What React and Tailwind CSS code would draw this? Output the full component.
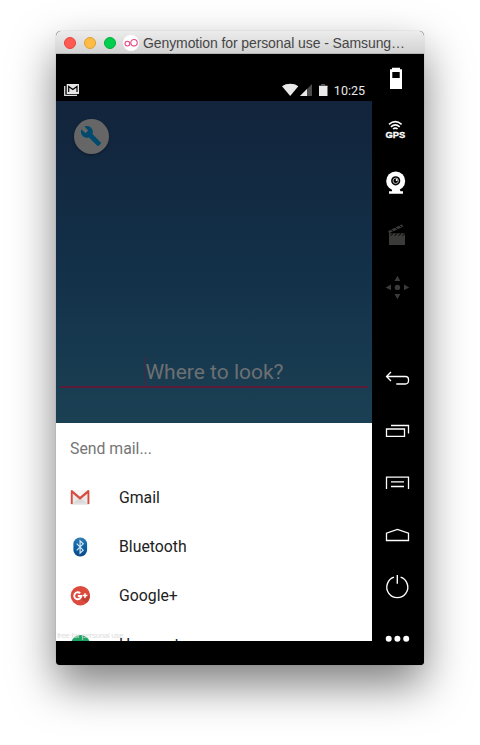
import React from "react";

function Slot({ children, label }) {
  return (
    <svg aria-label={label} className="block h-[52px] w-[52px] shrink-0" viewBox="0 0 52 52" fill="none">
      {children}
    </svg>
  );
}

function TitleBar() {
  return (
    <div className="flex h-[23px] shrink-0 items-center rounded-t-[5px] border-b border-[#b5b5b5] bg-linear-to-b from-[#ececec] to-[#d3d3d3] pt-px pl-2">
      <div className="flex gap-2">
        <span className="size-3 rounded-full border border-[#e2463f] bg-[#ff5a52]" />
        <span className="size-3 rounded-full border border-[#dfa033] bg-[#ffbc44]" />
        <span className="size-3 rounded-full border border-[#05ac3c] bg-[#00ce4e]" />
      </div>
      <svg className="ml-[7px] size-4" viewBox="0 0 16 16" fill="none">
        <circle cx="8" cy="8" r="8" fill="#fff" />
        <circle cx="4.4" cy="8.6" r="2.4" stroke="#e6457f" strokeWidth="1.1" />
        <circle cx="11" cy="7.7" r="3.2" stroke="#e6457f" strokeWidth="1.1" />
      </svg>
      <span className="ml-1 whitespace-nowrap font-['Liberation_Sans',Arial,sans-serif] text-[14px] leading-none tracking-[-0.090px] text-[#464646]">
        Genymotion for personal use - Samsung…
      </span>
    </div>
  );
}

function StatusBar() {
  return (
    <div className="flex h-[47px] shrink-0 items-end justify-between bg-black pr-[7px] pb-[3px] pl-2">
      <svg className="mb-[1px] h-[14px] w-4" viewBox="0 0 16 14" fill="none">
        <path d="M.7 3v9.4h12.3" stroke="#dedede" strokeWidth="1.3" />
        <rect x="2.7" y="1" width="12.3" height="10" fill="#e6e6e6" />
        <path d="M4.7 9V3.4L8.8 6.500 13 3.400V9" stroke="#000" strokeWidth="1.2" />
      </svg>
      <div className="flex items-end">
        <svg className="mb-[1px] h-[14px] w-[48px]" viewBox="0 0 48 14">
          <path d="M0 3.300C4.300 0 12.300 0 16.300 3.300L8.200 13Z" fill="#e9e9e9" />
          <path d="M30 1V13H18Z" fill="#4b4b4b" />
          <path d="M25 6V13H18Z" fill="#e9e9e9" />
          <path d="M39 1H43V2.200H45.500V4H37V2.200H39Z" fill="#555" />
          <path d="M37 3H45.500V13H37Z" fill="#e9e9e9" />
        </svg>
        <span className="ml-1 font-[Roboto,sans-serif] text-[12.500px] leading-[15px] text-[#e9e9e9]">10:25</span>
      </div>
    </div>
  );
}

function SearchScreen() {
  return (
    <div className="flex h-[322px] shrink-0 flex-col bg-linear-to-b from-[#12243c] via-[#123048] to-[#1b4054] pt-[17.500px]">
      <div className="ml-[17.500px] flex size-[35.500px] items-center justify-center rounded-full bg-[#666] shadow-[0_1px_3px_rgba(0,0,0,0.4)]">
        <svg className="size-[22px]" viewBox="0 0 24 24" fill="#014a6e">
          <path d="M22.700 19l-9.100-9.100c.9-2.300.4-5-1.500-6.900-2-2-5-2.400-7.400-1.300L9 6 6 9 1.600 4.700C.4 7.100.9 10.100 2.900 12.100c1.900 1.900 4.600 2.400 6.900 1.500l9.100 9.100c.4.4 1 .4 1.400 0l2.300-2.300c.5-.4.5-1.100.1-1.400z" />
        </svg>
      </div>
      <div className="mx-1 mt-[203px] flex h-[31px] items-start justify-center border-b-2 border-[#5a1c38]">
        <span className="flex h-[29px] items-center border-l border-[#4a2440] font-[Roboto,sans-serif] text-[21px] leading-[30px] text-[#6d7072]">
          Where to look?
        </span>
      </div>
    </div>
  );
}

function GmailIcon() {
  return (
    <svg className="h-[15px] w-5" viewBox="0 0 20 15">
      <path d="M1 0H19V15H1Z" fill="#e9e9e9" />
      <path d="M3 13.500L10 7l7 6.500Z" fill="#dadada" />
      <path d="M2 0H18L10 7Z" fill="#f5f5f5" />
      <path d="M.8 1.400Q.8 0 2 0L10 6.800 18 0Q19.400 0 19.400 1.400V14H17.500V3.400L10 9.800 2.700 3.400V14H.8Z" fill="#d94b3f" />
    </svg>
  );
}

function BluetoothIcon() {
  return (
    <svg className="h-5 w-5" viewBox="0 0 20 20" fill="none">
      <defs>
        <linearGradient id="btFill" x1="0" y1="0" x2="0" y2="1">
          <stop stopColor="#347eb1" />
          <stop offset=".5" stopColor="#0961a8" />
          <stop offset="1" stopColor="#0c4a83" />
        </linearGradient>
      </defs>
      <rect x="3.400" y=".5" width="13.700" height="19" rx="6.500" fill="url(#btFill)" />
      <path d="M6.700 6.700l6.500 6.500-3.100 3V3.800l3.100 3-6.500 6.500" stroke="#d7e5f2" strokeWidth="1.200" />
    </svg>
  );
}

function GooglePlusIcon() {
  return (
    <svg className="h-5 w-5" viewBox="0 0 20 20" fill="none">
      <circle cx="10.400" cy="9.700" r="9.700" fill="#db4a3d" />
      <path d="M11 13l5.500 4A9.700 9.700 0 0 0 19.700 10L17 9Z" fill="#c24034" />
      <path d="M10.200 7.300A3.500 3.500 0 1 0 11.200 10H7.800" stroke="#fff" strokeWidth="1.900" />
      <path d="M15 7.200v4.800M12.600 9.600h4.800" stroke="#fff" strokeWidth="1.500" />
    </svg>
  );
}

function HangoutsIcon() {
  return (
    <svg className="h-5 w-5" viewBox="0 0 20 20">
      <circle cx="10.500" cy="9.500" r="9.500" fill="#1fa463" />
      <path d="M6.500 8.500h3v4h-3zM11.500 8.500h3v4h-3z" fill="#fff" />
    </svg>
  );
}

const targets = [
  ["Gmail", GmailIcon],
  ["Bluetooth", BluetoothIcon],
  ["Google+", GooglePlusIcon],
  ["Hangouts", HangoutsIcon],
];

function ShareSheet() {
  return (
    <div className="relative h-[218px] shrink-0 overflow-hidden bg-white font-[Roboto,sans-serif] text-[15.800px]">
      <div className="flex h-[50px] items-center pt-[2px] pl-[14px] text-[#757575]">Send mail...</div>
      {targets.map(([name, Icon]) => (
        <div key={name} className="flex h-[49px] items-center pl-[14px] text-[#212121]">
          <div className="flex w-[49px] items-center"><Icon /></div>
          {name}
        </div>
      ))}
      <span className="absolute bottom-px left-px font-['Liberation_Sans',Arial,sans-serif] text-[8px] leading-[8px] tracking-[-0.350px] text-[#dedede]">
        free for personal use
      </span>
    </div>
  );
}

function Toolbar() {
  return (
    <div className="flex w-[52px] shrink-0 flex-col justify-between rounded-br-[4px] bg-black">
      <div>
        <Slot label="Battery">
          <path d="M20 13.700h8v1.600h2V35H18V15.300h2Z" fill="#fff" />
          <rect x="20.300" y="18" width="7.400" height="6" fill="#000" />
        </Slot>
        <Slot label="GPS">
          <path d="M17 18.300q6.300-5.200 12.600 0M18.900 20.800q4.400-3.700 8.800 0M21 23q2.300-1.900 4.600 0" stroke="#fff" strokeWidth="1.600" />
          <text x="13.400" y="32.300" fill="#fff" stroke="#fff" strokeWidth=".3" fontSize="9" fontWeight="700" textLength="19.800" lengthAdjust="spacingAndGlyphs" fontFamily="Liberation Sans, Arial, sans-serif">GPS</text>
        </Slot>
        <Slot label="Camera">
          <circle cx="23.700" cy="23" r="9.500" fill="#fff" />
          <circle cx="23.700" cy="22.800" r="4.600" fill="#000" />
          <circle cx="23.700" cy="22.800" r="2.700" stroke="#fff" strokeWidth=".7" />
          <circle cx="24.700" cy="21.900" r="1" fill="#fff" />
          <path d="M20 31h7.500l1 2.200H31v2.500H17v-2.500h3Z" fill="#fff" />
        </Slot>
        <Slot label="Screencast">
          <path d="M17 23.300H33V35H17Z" fill="#3b3c39" />
          <path d="M16 21.300L30 14.300l1 2.400-14 6.600Z" fill="#3b3c39" />
          <path d="M18.500 25.700l2.500-2M22.500 25.700l2.500-2M26.500 25.700l2.500-2M30.500 25.700l2.500-2M19 19.500l2.500 2M23 17.300l2.500 2M27 15.200l2.500 2" stroke="#000" strokeWidth="1" />
        </Slot>
        <Slot label="Remote control">
          <circle cx="25.400" cy="25.400" r="2.700" fill="#3b3c39" />
          <path d="M25.400 13.700l2.900 5.300h-5.800ZM25.400 37.300l2.900-5.300h-5.800ZM13.600 25.400L19 22.500v5.800ZM37.200 25.400L32 22.500v5.800Z" fill="#3b3c39" />
        </Slot>
      </div>
      <div>
        <Slot label="Back">
          <path d="M19 19l-4.500 4.500L19 28M14.500 23.500H33.500a3 3 0 0 1 3 3v1.500a3 3 0 0 1-3 3H24.300" stroke="#fff" strokeWidth="1.300" />
        </Slot>
        <Slot label="Recent apps">
          <path d="M14.500 24h18v7.300h-18ZM19 20.500h17.500v8" stroke="#fff" strokeWidth="1.300" />
        </Slot>
        <Slot label="Menu">
          <path d="M14.500 32V20.200h22V32M19 24.800h13M19 29.500h13" stroke="#fff" strokeWidth="1.300" />
        </Slot>
        <Slot label="Home">
          <path d="M14.500 31.500V24.200l10.900-3.700 11.100 3.700v7.300Z" stroke="#fff" strokeWidth="1.300" />
        </Slot>
        <Slot label="Power">
          <path d="M22 16.200a10.500 10.500 0 1 0 6.600 0M25.300 14v8.700" stroke="#fff" strokeWidth="1.400" />
        </Slot>
        <Slot label="More">
          <circle cx="16.700" cy="25.700" r="3" fill="#fff" />
          <circle cx="25.400" cy="25.700" r="3" fill="#fff" />
          <circle cx="34.200" cy="25.700" r="3" fill="#fff" />
        </Slot>
      </div>
    </div>
  );
}

export default function App() {
  return (
    <div className="h-[745px] w-[480px] overflow-hidden bg-white pt-[31px] pl-[56px]">
      <div className="flex h-[634px] w-[368px] flex-col rounded-t-[5px] rounded-b-[4px] bg-black shadow-[0_20px_44px_rgba(0,0,0,0.5),0_0_1px_rgba(0,0,0,0.4)]">
        <TitleBar />
        <div className="flex h-[611px]">
          <div className="flex w-[316px] flex-col">
            <StatusBar />
            <SearchScreen />
            <ShareSheet />
          </div>
          <Toolbar />
        </div>
      </div>
    </div>
  );
}
